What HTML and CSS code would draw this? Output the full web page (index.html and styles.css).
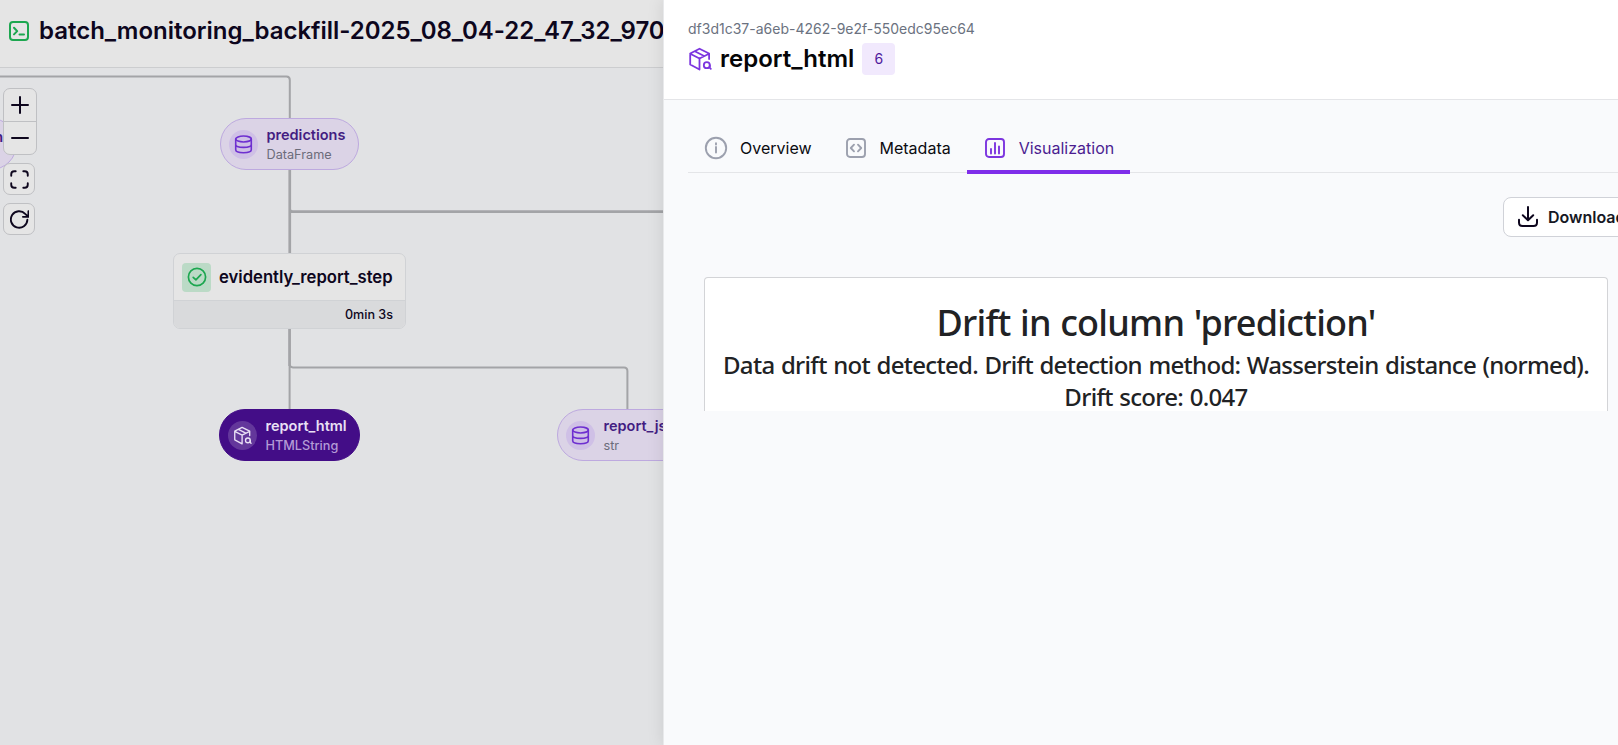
FILE: index.html
```html
<!DOCTYPE html>
<html lang="en">
<head>
<meta charset="utf-8">
<title>batch_monitoring_backfill</title>
<link rel="stylesheet" href="styles.css">
</head>
<body>
<svg class="sprite" width="0" height="0">
  <symbol id="db" viewBox="0 0 20 20"><ellipse cx="10" cy="4.2" rx="8.2" ry="3.1"/><path d="M1.8 4.2v11.4c0 1.8 3.6 3.1 8.2 3.1s8.2-1.3 8.2-3.1V4.2M1.8 9.9c0 1.8 3.6 3.1 8.2 3.1s8.2-1.3 8.2-3.1"/></symbol>
  <symbol id="box" viewBox="0 0 24 24"><path d="M11.5 22.500 2.200 17.500V6.500L11.500 1.700l9.600 4.800v5.500M2.200 6.800l9.300 4.700 9.600-4.700M11.500 11.500v11M6.800 4.300l9.300 4.700"/><circle cx="18.800" cy="18.200" r="3"/><path d="M21.800 18.200v2.600l1 1"/></symbol>
</svg>
<div class="app">
  <main class="run">
    <header class="run-head">
      <svg class="run-icon" viewBox="0 0 20 20"><rect x="1" y="1" width="18" height="18" rx="3"/><path d="m5 6.7 3.2 3.4L5 13.4M10.500 13.500h4.500"/></svg>
      <h1>batch_monitoring_backfill-2025_08_04-22_47_32_970</h1>
    </header>
    <section class="canvas">
      <svg class="edges" width="664" height="677">
        <path d="M0 8.500H286.500Q289.800 8.500 289.800 12V185M289.800 143.500H664M289.800 102V140Q289.800 143.500 293 143.500M289.600 261V341M289.600 261V296Q289.600 299.400 293 299.400H624Q627.400 299.400 627.400 303V341"/>
        <path class="thick" d="M289.800 102V185M291 143.700H664M289.600 261V298"/>
      </svg>
      <div class="pill pill-cut"><span class="pill-name">n</span></div>
      <div class="pill pill-pred"><span class="dot"><svg><use href="#db"/></svg></span><div><b>predictions</b><small>DataFrame</small></div></div>
      <div class="step">
        <div class="step-top"><span class="ok"><svg viewBox="0 0 20 20"><circle cx="10" cy="10" r="8.600"/><path d="m6.200 10.300 2.700 2.600 5-5.200"/></svg></span><b>evidently_report_step</b></div>
        <div class="step-time">0min 3s</div>
      </div>
      <div class="pill pill-html"><span class="dot"><svg><use href="#box"/></svg></span><div><b>report_html</b><small>HTMLString</small></div></div>
      <div class="pill pill-json"><span class="dot"><svg><use href="#db"/></svg></span><div><b>report_json</b><small>str</small></div></div>
      <div class="controls">
        <div class="zoom">
          <button><svg viewBox="0 0 20 20"><path d="M10 2v16M2 10h16"/></svg></button>
          <button><svg viewBox="0 0 20 20"><path d="M2 10h16"/></svg></button>
        </div>
        <button class="single"><svg viewBox="0 0 20 20"><path d="M1.300 6V4.500Q1.300 1.300 4.500 1.300H6M14 1.300h1.500q3.200 0 3.200 3.200V6M18.700 14v1.500q0 3.200-3.200 3.200H14M6 18.700H4.500q-3.200 0-3.200-3.200V14"/></svg></button>
        <button class="single"><svg viewBox="0 0 20 20"><path d="M18.300 10.300A8.700 8.700 0 1 1 16 4.100l2.800 2.600M19.400 1.200v6h-5.800"/></svg></button>
      </div>
    </section>
  </main>
  <aside class="drawer">
    <header class="drawer-head">
      <p>df3d1c37-a6eb-4262-9e2f-550edc95ec64</p>
      <div class="title"><svg><use href="#box"/></svg><h2>report_html</h2><span class="badge">6</span></div>
    </header>
    <div class="drawer-body">
      <nav class="tabs">
        <a class="tab"><svg viewBox="0 0 24 24"><circle cx="12" cy="12" r="10.200"/><path d="M12 11v5.500M12 7.200v1.400"/></svg><span>Overview</span></a>
        <a class="tab"><svg viewBox="0 0 24 24"><rect x="3" y="3" width="18" height="18" rx="3"/><path d="m10 8.700-3.200 3.300 3.200 3.300M14 8.700l3.200 3.300-3.200 3.300"/></svg><span>Metadata</span></a>
        <a class="tab active"><svg viewBox="0 0 24 24"><rect x="3" y="3" width="18" height="18" rx="3"/><path d="M8 13v4.500M12 7v10.500M16 10.500v7"/></svg><span>Visualization</span></a>
      </nav>
      <div class="actions"><button class="download"><svg viewBox="0 0 20 20"><path d="M10 0v13M4.800 8.200 10 13.300l5.200-5.100M1 12.800v2.700Q1 19 4.500 19h11q3.500 0 3.500-3.500v-2.700"/></svg><span>Download</span></button></div>
      <div class="report">
        <h3>Drift in column 'prediction'</h3>
        <p>Data drift not detected. Drift detection method: Wasserstein distance (normed).<br>Drift score: 0.047</p>
      </div>
    </div>
  </aside>
</div>
</body>
</html>
```
FILE: styles.css
```css
* { box-sizing: border-box; margin: 0; padding: 0; }
body { font-family: Inter, "Liberation Sans", sans-serif; width: 1618px; height: 745px; overflow: hidden; color: #0d061d; }
svg { fill: none; stroke: currentColor; stroke-width: 2; stroke-linecap: round; stroke-linejoin: round; }
.sprite { position: absolute; }
button { font: inherit; color: inherit; border: 0; background: none; }
.app { display: flex; height: 745px; width: 1618px; overflow: hidden; }
.run { width: 663px; flex: none; background: #e1e2e4; overflow: hidden; }
.run-head { height: 68px; background: #e5e5e5; border-bottom: 1px solid #cccdcf; display: flex; align-items: center; padding: 0 0 6px 9px; gap: 10px; }
.run-icon { width: 20px; height: 20px; flex: none; color: #1da750; }
h1 { font-size: 24px; line-height: 30px; font-weight: 600; white-space: nowrap; letter-spacing: -0.02px; }
.canvas { position: relative; height: 677px; overflow: hidden; }
.edges { position: absolute; inset: 0; color: #a3a4a7; stroke-linecap: butt; }
.thick { stroke-width: 2.600; }

.pill { position: absolute; height: 52px; border: 1px solid #bda9df; border-radius: 26px; background: #dbd3e6; display: flex; align-items: center; padding-left: 8px; gap: 8.500px; color: #431d82; white-space: nowrap; }
.pill b { display: block; font-size: 14.500px; line-height: 20px; font-weight: 600; }
.pill small { display: block; font-size: 12.700px; line-height: 18px; color: #6b6c7a; position: relative; top: 1px; }
.dot { width: 29px; height: 29px; border-radius: 50%; background: #cfc0e6; display: flex; align-items: center; justify-content: center; color: #6e2fd0; flex: none; }
.dot svg { width: 19px; height: 19px; stroke-width: 1.700; }
.pill-pred { left: 220px; top: 50px; width: 139px; }
.pill-html { left: 219px; top: 341px; width: 141px; background: #430d87; border-color: #430d87; color: #e9e0f5; }
.pill-html small { color: #b49bd6; font-weight: 500; }
.pill-html .dot { background: #63379b; color: #e9e0f5; }
.pill-json { left: 557px; top: 341px; width: 142px; }
.pill-cut { left: -120px; top: 50px; width: 137px; justify-content: flex-end; padding: 0 13px 16px 0; }
.pill-name { font-size: 14.500px; font-weight: 600; }

.step { position: absolute; left: 173px; top: 185px; width: 233px; height: 76px; border: 1px solid #d0d2d5; border-radius: 7px; overflow: hidden; background: #e5e5e5; }
.step-top { height: 47px; display: flex; align-items: center; padding-left: 8px; gap: 8px; border-bottom: 1px solid #d0d2d5; }
.step-top b { font-size: 16.650px; font-weight: 600; }
.ok { width: 29px; height: 29px; border-radius: 4px; background: #bbdac6; color: #1da750; display: flex; align-items: center; justify-content: center; }
.ok svg { width: 20px; height: 20px; stroke-width: 1.700; }
.step-time { height: 27px; background: #d9dadc; font-size: 12.600px; font-weight: 500; line-height: 28px; text-align: right; padding-right: 12px; }

.controls { position: absolute; left: 3px; top: 20px; display: flex; flex-direction: column; align-items: flex-start; gap: 8px; }
.zoom { width: 34px; height: 67px; border: 1px solid #bfc0c3; border-radius: 7px; background: #e5e5e5; }
.zoom button { width: 32px; height: 32px; display: flex; align-items: center; justify-content: center; }
.zoom button + button { height: 33px; border-top: 1px solid #bfc0c3; }
.zoom svg { width: 20px; height: 20px; }
.single svg { width: 19px; height: 19px; }
.single { width: 32px; height: 32px; border: 1px solid #bfc0c3; border-radius: 7px; background: #e5e5e5; display: flex; align-items: center; justify-content: center; }

.drawer { width: 1001px; flex: none; background: #f9fafc; border-left: 1px solid #e8e9eb; position: relative; box-shadow: 0 0 16px rgba(0,0,0,.1); color: #0b0b10; }
.drawer-head { height: 100px; background: #fff; border-bottom: 1px solid #e4e5e8; padding: 19px 24px 0; }
.drawer-head p { font-size: 14px; line-height: 20px; color: #6b7280; }
.title { display: flex; align-items: center; margin-top: 4px; }
.title svg { width: 24px; height: 24px; color: #7c35df; stroke-width: 1.800; }
h2 { font-size: 24px; line-height: 30px; font-weight: 600; margin-left: 8px; color: #050507; }
.badge { width: 33px; height: 32px; border-radius: 4px; background: #f1e9fd; color: #4f1a9c; font-size: 14px; line-height: 32px; text-align: center; margin-left: 8px; }
.drawer-body { padding: 24px 0 0 24px; }
.tabs { display: flex; height: 49px; border-bottom: 1px solid #e4e5e8; }
.tab { height: 50px; display: flex; align-items: center; padding: 0 16px 2px; gap: 12px; font-size: 16px; }
.tab svg { width: 24px; height: 24px; color: #9ca0ae; stroke-width: 1.900; }
.tab.active { color: #4b1d91; border-bottom: 4px solid #7f2eea; padding: 2px 16px 0; }
.tab.active svg { color: #7c35df; }
.actions { margin: 24px 0 0 815px; }
.download { width: 146px; height: 40px; border: 1px solid #d0d2d8; border-radius: 8px; background: #fff; display: flex; align-items: center; padding-left: 14px; gap: 10px; font-size: 16px; font-weight: 600; color: #161824; }
.download svg { width: 20px; height: 20px; color: #0d061d; overflow: visible; }
.report { width: 904px; height: 134px; margin: 40px 0 0 16px; border: 1px solid #d3d4d7; border-bottom: 0; border-radius: 4px 4px 0 0; background: #fff; overflow: hidden; text-align: center; color: #212224; font-family: "Noto Sans", "Open Sans", sans-serif; font-weight: 500; white-space: nowrap; }
.report h3 { font-size: 36px; line-height: 44px; font-weight: 500; margin-top: 23px; letter-spacing: -0.750px; word-spacing: 0.800px; }
.report p { font-size: 24px; line-height: 32px; margin-top: 4px; letter-spacing: -0.690px; word-spacing: 0.900px; }
```
